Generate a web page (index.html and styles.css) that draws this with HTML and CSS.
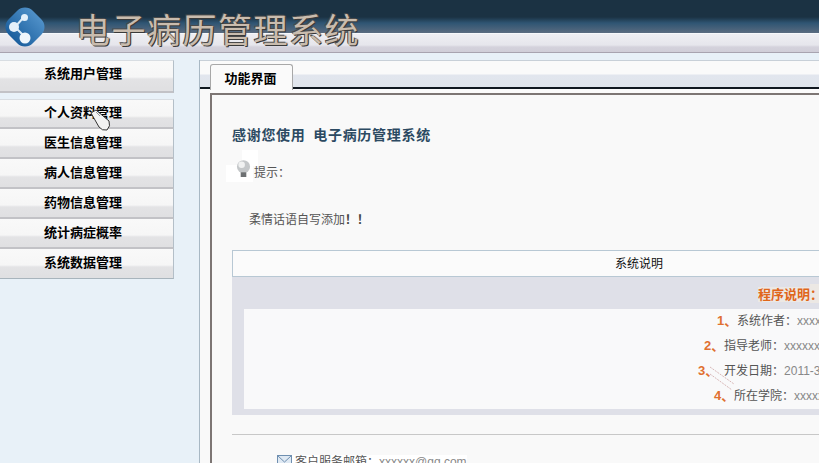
FILE: index.html
```html
<!DOCTYPE html>
<html lang="zh-CN">
<head>
<meta charset="utf-8">
<title>电子病历管理系统</title>
<link rel="stylesheet" href="styles.css">
</head>
<body>
<header class="header">
  <div class="band-dark"></div>
  <div class="band-light"></div>
  <svg class="logo" width="50" height="50" viewBox="0 0 50 50">
    <defs>
      <linearGradient id="lg" x1="0" y1="0" x2="0" y2="1">
        <stop offset="0" stop-color="#4f90c8"/>
        <stop offset="1" stop-color="#1b5f9e"/>
      </linearGradient>
    </defs>
    <rect x="8" y="8" width="34" height="34" rx="11" transform="rotate(45 25 25)" fill="url(#lg)"/>
    <path d="M15 25 L24 15 M15 25 L25 35" stroke="#dcecf8" stroke-width="2" fill="none"/>
    <circle cx="14" cy="25" r="5" fill="#e4f0fa"/>
    <circle cx="24.500" cy="15.500" r="3.500" fill="#e4f0fa"/>
    <circle cx="25" cy="36" r="5.500" fill="#eef6fc"/>
  </svg>
  <div class="brand">电子病历管理系统</div>
</header>

<div class="layout">
  <nav class="side">
    <a class="item first">系统用户管理</a>
    <div class="item-list">
      <a class="item">个人资料管理</a>
      <a class="item">医生信息管理</a>
      <a class="item">病人信息管理</a>
      <a class="item">药物信息管理</a>
      <a class="item">统计病症概率</a>
      <a class="item">系统数据管理</a>
    </div>
  </nav>

  <main class="main">
    <div class="tabs">
      <div class="tab">功能界面</div>
    </div>
    <div class="rules"></div>
    <section class="panel">
      <h1 class="welcome">感谢您使用&nbsp;&nbsp;电子病历管理系统</h1>
      <div class="tip">
        <span class="tip-icon">
          <svg width="15" height="19" viewBox="0 0 16 20">
            <circle cx="8" cy="7" r="7" fill="#c4c7c9"/>
            <circle cx="6" cy="5" r="3.500" fill="#f0f1f1"/>
            <rect x="5" y="13" width="6" height="5" fill="#6d7072"/>
          </svg>
        </span>
        <span>提示<span class="colon">：</span></span>
      </div>
      <p class="note">柔情话语自写添加<b>！！</b></p>
      <div class="card">
        <div class="card-head">系统说明</div>
        <div class="card-body">
          <div class="prog"><span>程序说明<span class="colon">：</span></span></div>
          <div class="list">
            <div class="row r1"><b>1、</b>系统作者<span class="colon">：</span><i>xxxxxxxx</i></div>
            <div class="row r2"><b>2、</b>指导老师<span class="colon">：</span><i>xxxxxxxx</i></div>
            <div class="row r3"><b>3、</b>开发日期<span class="colon">：</span><i>2011-3-20</i></div>
            <div class="row r4"><b>4、</b>所在学院<span class="colon">：</span><i>xxxxxxxx</i></div>
          </div>
        </div>
      </div>
      <hr class="sep">
      <div class="mail">
        <svg width="15" height="12" viewBox="0 0 15 12">
          <rect x="0.500" y="0.500" width="14" height="11" fill="#dfe9f3" stroke="#6f8fb0"/>
          <path d="M1 1 L7.500 7 L14 1" fill="none" stroke="#6f8fb0"/>
        </svg>
        <span>客户服务邮箱<span class="colon">：</span><i>xxxxxx@qq.com</i></span>
      </div>
    </section>
  </main>
</div>

<svg class="cursor" width="24" height="24" viewBox="0 0 24 24">
  <path d="M3 4 L8 1 L21 12 Q23 17 19 21 Q14 22 11 18 Z" fill="#f2f2f2" stroke="#333" stroke-width="1"/>
  <path d="M8 3 L12 7" stroke="#999" fill="none"/>
</svg>
<svg class="ticks" width="40" height="26" viewBox="0 0 40 26">
  <path d="M2 1 L26 18 M2 8 L24 24" stroke="#d8b8b8" stroke-dasharray="2 1" fill="none"/>
</svg>
</body>
</html>
```
FILE: styles.css
```css
* { box-sizing: border-box; }
html, body { margin: 0; padding: 0; }
body {
  width: 819px;
  height: 463px;
  overflow: hidden;
  position: relative;
  background: #e8f1f8;
  font-family: "Liberation Sans", "Noto Sans CJK SC", sans-serif;
  font-size: 12px;
  color: #555;
}
.colon { font-family: "Noto Sans CJK TC", sans-serif; line-height: 1; }
.header { position: relative; height: 53px; }
.band-dark {
  height: 33px;
  background: linear-gradient(#1b3243 0, #1b3243 17px, #2f5573 23px, #5a6b80 33px);
}
.band-light {
  height: 20px;
  border-top: 1px solid #f6f8fb;
  border-bottom: 1px solid #a8a4b0;
  background: linear-gradient(#eeeef3 0, #e6e6ec 11px, #d4d2dc 13px, #d0ced8 18px);
}
.logo { position: absolute; left: 0; top: 2px; }
.brand {
  position: absolute;
  left: 76px;
  top: 7px;
  font-family: "Noto Sans CJK SC", sans-serif;
  font-size: 34px;
  letter-spacing: 1.500px;
  line-height: 44px;
  white-space: nowrap;
  color: #c9bcae;
  text-shadow: 1px 1px 0 #3a3a3a, -1px -1px 0 #4a4a4a, 1px 0 1px #6a5a50;
}
.layout { display: flex; height: 410px; align-items: flex-start; }
.side { width: 174px; margin-top: 7px; flex: none; }
.item-list { margin-top: 6px; }
.item {
  display: block;
  height: 30px;
  padding: 4px 0 0 44px;
  line-height: 18px;
  font-family: "Noto Sans CJK SC", sans-serif;
  font-size: 13px;
  font-weight: 700;
  color: #000;
  background: linear-gradient(#f9f9f9 0, #f6f6f6 16px, #e3e3e5 18px, #e0e0e2 27px);
  border-right: 1px solid #b4bfc8;
  border-bottom: 2px solid #c2c2c6;
}
.item.first { height: 33px; padding-top: 3px; border-top: 1px solid #d8dde2; }
.item-list .item:first-child { border-top: 1px solid #d8dde2; padding-top: 3px; }
.item-list .item:last-child { border-bottom: 1px solid #a8b4bc; }
.main {
  flex: none;
  width: 645px;
  height: 410px;
  margin: 7px 0 0 25px;
  border-left: 1px solid #a8b8c4;
  background: #f9f9f9;
}
.tabs {
  height: 29px;
  padding: 3px 0 0 10px;
  border-top: 1px solid #c8d0d8;
  background: linear-gradient(#fafafa 0, #fafafa 13px, #e2e6ee 14px, #e0e5ec 26px);
  border-bottom: 2px solid #101820;
}
.tab {
  width: 83px;
  height: 26px;
  padding-right: 2px;
  line-height: 25px;
  text-align: center;
  font-family: "Noto Sans CJK SC", sans-serif;
  font-size: 13px;
  font-weight: 700;
  color: #000;
  background: #fafafa;
  border: 1px solid #a8a8a8;
  border-bottom: 0;
  border-radius: 3px 3px 0 0;
  position: relative;
}
.rules { height: 6px; border-bottom: 2px solid #7d7674; background: #fbfbfb; margin-left: 10px; }
.panel {
  margin-left: 10px;
  height: 372px;
  padding: 30px 0 0 20px;
  border-left: 2px solid #7d7674;
  background: #f9f9f9;
  width: 700px;
}
.welcome {
  margin: 0;
  font-family: "Noto Sans CJK SC", sans-serif;
  font-size: 14px;
  letter-spacing: 0.700px;
  line-height: 18px;
  font-weight: 700;
  color: #2c4a62;
}
.tip { display: flex; align-items: flex-start; margin: 7px 0 0 -6px; height: 35px; line-height: 16px; color: #555; }
.tip > span:last-child { padding-top: 15px; }
.tip-icon {
  flex: none;
  width: 32px;
  height: 35px;
  margin-right: -4px;
  padding: 10px 0 0 10px;
  background:
    linear-gradient(#fff, #fff) 16px 0 / 16px 16px no-repeat,
    linear-gradient(#fff, #fff) 0 15px / 27px 17px no-repeat;
}
.tip-icon svg { display: block; }
.note { margin: 26px 0 0 17px; line-height: 18px; color: #555; }
.note b { color: #444; }
.card { width: 814px; margin-top: 21px; }
.card-head {
  height: 27px;
  line-height: 26px;
  text-align: center;
  color: #111;
  background: #fbfbfb;
  border: 1px solid #b8c8d4;
}
.card-body { height: 138px; padding: 0 0 6px 12px; background: #dfe0e8; }
.prog {
  height: 32px;
  padding: 9px 0 0 514px;
  line-height: 18px;
  font-weight: 700;
  font-size: 13px;
  color: #e0661a;
}
.prog span { background: #ece8e4; }
.list { height: 100px; background: #f9f9fa; }
.row { height: 25px; line-height: 24px; white-space: nowrap; color: #555; }
.row b { display: inline-block; color: #e07030; font-size: 13px; line-height: 1; }
.row i { font-style: normal; color: #888; }
.r1 { padding-left: 473px; }
.r1 b { width: 20px; }
.r2 { padding-left: 460px; }
.r2 b { width: 20px; }
.r3 { padding-left: 454px; }
.r3 b { width: 26px; }
.r4 { padding-left: 470px; }
.r4 b { width: 20px; }
.sep { width: 814px; margin: 19px 0 0; border: 0; border-top: 1px solid #c8c8c8; }
.mail {
  display: flex;
  align-items: flex-start;
  gap: 3px;
  width: 190px;
  margin: 20px 0 0 45px;
  height: 20px;
  line-height: 14px;
  white-space: nowrap;
  background: #fff;
  color: #555;
}
.mail i { font-style: normal; color: #888; }
.cursor { position: absolute; left: 88px; top: 109px; }
.ticks { position: absolute; left: 708px; top: 366px; }
```
